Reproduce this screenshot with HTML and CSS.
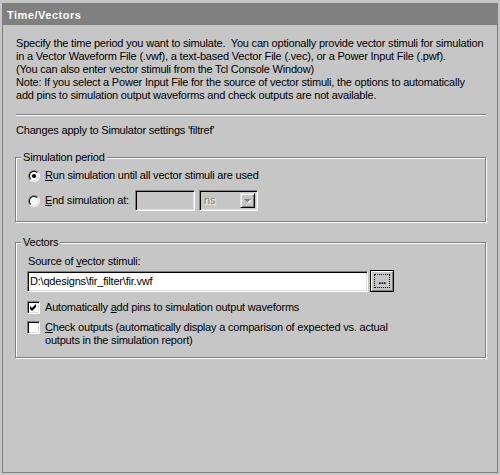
FILE: index.html
```html
<!DOCTYPE html>
<html lang="en">

<head>
    <meta charset="UTF-8">
    <title>Time/Vectors</title>
    <link rel="stylesheet" href="styles.css">
</head>

<body>
    <div class="panel">
        <div class="title-bar">Time/Vectors</div>

        <div class="panel-body">
            <p class="intro">
                Specify the time period you want to simulate.&nbsp; You can optionally provide vector stimuli for simulation<br>
                in a Vector Waveform File (.vwf), a text-based Vector File (.vec), or a Power Input File (.pwf).<br>
                (You can also enter vector stimuli from the Tcl Console Window)<br>
                Note: If you select a Power Input File for the source of vector stimuli, the options to automatically<br>
                add pins to simulation output waveforms and check outputs are not available.
            </p>

            <div class="separator"></div>

            <p class="settings-note">Changes apply to Simulator settings 'filtref'</p>

            <fieldset class="group group-period">
                <legend>Simulation period</legend>

                <div class="option-row">
                    <span class="radio"><span class="radio-inner"><span class="radio-dot"></span></span></span>
                    <span class="option-label"><u>R</u>un simulation until all vector stimuli are used</span>
                </div>

                <div class="option-row">
                    <span class="radio"><span class="radio-inner"></span></span>
                    <span class="option-label end-label"><u>E</u>nd simulation at:</span>
                    <span class="field field-time"></span>
                    <span class="combo">
                        <span class="combo-text">ns</span>
                        <span class="combo-btn">
                            <svg width="7" height="4" viewBox="0 0 7 4">
                                <path d="M1 1h7l-3.5 3.5z" fill="#fff"/>
                                <path d="M0 0h7l-3.5 3.5z" fill="#808080"/>
                            </svg>
                        </span>
                    </span>
                </div>
            </fieldset>

            <fieldset class="group group-vectors">
                <legend>Vectors</legend>

                <div class="source-label">Source of <u>v</u>ector stimuli:</div>

                <div class="source-row">
                    <div class="field field-source">D:\qdesigns\fir_filter\fir.vwf</div>
                    <div class="browse-btn"><span class="focus-rect">...</span></div>
                </div>

                <div class="check-row check-add">
                    <span class="checkbox">
                        <svg width="7" height="7" viewBox="0 0 7 7">
                            <path d="M0 2l2 2l4-4v3l-4 4l-2-2z" fill="#000"/>
                        </svg>
                    </span>
                    <span>Automatically <u>a</u>dd pins to simulation output waveforms</span>
                </div>

                <div class="check-row check-outputs">
                    <span class="checkbox"></span>
                    <span><u>C</u>heck outputs (automatically display a comparison of expected vs. actual<br>outputs in the simulation report)</span>
                </div>
            </fieldset>
        </div>
    </div>
</body>

</html>
```

FILE: styles.css
```css
* {
    margin: 0;
    padding: 0;
    box-sizing: border-box;
}

body {
    font-family: "Liberation Sans", Arial, sans-serif;
    font-size: 11px;
    line-height: 13px;
    letter-spacing: -0.2px;
    color: #000;
    background: #c6c6c6;
}

.panel {
    height: 470px;
    margin: 3px 2px 0 2px;
    border: 1px solid #808080;
}

.title-bar {
    height: 21px;
    padding: 1px 0 0 4px;
    line-height: 20px;
    background: #808080;
    color: #fff;
    font-weight: bold;
    letter-spacing: 0.5px;
}

.panel-body {
    padding: 0 11px 0 12px;
}

.intro {
    margin: 12px 0 0 1px;
    white-space: nowrap;
}

.separator {
    height: 2px;
    margin: 12px 0 0 1px;
    border-top: 1px solid #808080;
    border-bottom: 1px solid #fff;
}

.settings-note {
    margin: 8px 0 0 1px;
}

/* group boxes */

.group {
    margin: 0;
    border: 1px solid #808080;
    box-shadow: inset 1px 1px 0 #fff, 1px 1px 0 #fff;
    min-inline-size: 0;
}

.group legend {
    margin-left: -7px;
    padding: 0 2px;
    line-height: 13px;
    background: #c6c6c6;
}

.group-period {
    margin-top: 14px;
    padding: 1px 12px 10px 12px;
}

.group-vectors {
    margin-top: 14px;
    padding: 6px 12px 10px 12px;
}

.option-row {
    display: flex;
    align-items: center;
    height: 21px;
}

.option-row + .option-row {
    margin-top: 4px;
}

.option-label {
    margin-left: 5px;
}

.end-label {
    width: 90px;
}

/* classic radio */

.radio {
    display: flex;
    width: 12px;
    height: 12px;
    border-radius: 50%;
    border: 1px solid;
    border-color: #808080 #fff #fff #808080;
    flex-shrink: 0;
}

.radio-inner {
    display: flex;
    align-items: center;
    justify-content: center;
    width: 10px;
    height: 10px;
    border-radius: 50%;
    border: 1px solid;
    border-color: #000 #dfdfdf #dfdfdf #000;
    background: #fff;
}

.radio-dot {
    width: 4px;
    height: 4px;
    border-radius: 50%;
    background: #000;
}

/* sunken fields */

.field {
    height: 21px;
    border: 1px solid;
    border-color: #808080 #fff #fff #808080;
    box-shadow: inset 1px 1px 0 #000, inset -1px -1px 0 #dfdfdf;
}

.field-time {
    width: 60px;
    background: #c6c6c6;
}

.combo {
    display: flex;
    align-items: center;
    justify-content: space-between;
    width: 59px;
    height: 21px;
    margin-left: 4px;
    padding: 2px 2px 2px 4px;
    border: 1px solid;
    border-color: #808080 #fff #fff #808080;
    box-shadow: inset 1px 1px 0 #000, inset -1px -1px 0 #dfdfdf;
    background: #c6c6c6;
}

.combo-text {
    color: #808080;
    text-shadow: 1px 1px 0 #fff;
}

.combo-btn {
    display: flex;
    align-items: center;
    justify-content: center;
    width: 15px;
    height: 15px;
    border: 1px solid;
    border-color: #dfdfdf #000 #000 #dfdfdf;
    box-shadow: inset 1px 1px 0 #fff, inset -1px -1px 0 #808080;
    background: #c6c6c6;
}

/* vectors */

.source-label {
    line-height: 13px;
}

.source-row {
    display: flex;
    align-items: flex-end;
    height: 22px;
    margin: 2px 0 0 -1px;
}

.field-source {
    width: 341px;
    padding: 0 2px;
    line-height: 19px;
    background: #fff;
    white-space: nowrap;
}

.browse-btn {
    display: flex;
    width: 24px;
    height: 22px;
    margin-left: 2px;
    padding: 3px;
    border: 1px solid #000;
    box-shadow: inset 1px 1px 0 #fff, inset -1px -1px 0 #808080;
    background: #c6c6c6;
}

.focus-rect {
    flex: 1;
    border: 1px dotted #000;
    font-weight: bold;
    line-height: 10px;
    text-align: center;
    letter-spacing: -0.5px;
}

.check-row {
    display: flex;
    align-items: flex-start;
    margin-left: -1px;
    line-height: 13px;
}

.check-add {
    margin-top: 9px;
}

.check-outputs {
    margin-top: 7px;
}

.check-row > span:last-child {
    margin-left: 5px;
}

.checkbox {
    display: flex;
    align-items: center;
    justify-content: center;
    width: 13px;
    height: 13px;
    flex-shrink: 0;
    border: 1px solid;
    border-color: #808080 #fff #fff #808080;
    box-shadow: inset 1px 1px 0 #000, inset -1px -1px 0 #dfdfdf;
    background: #fff;
}
```
